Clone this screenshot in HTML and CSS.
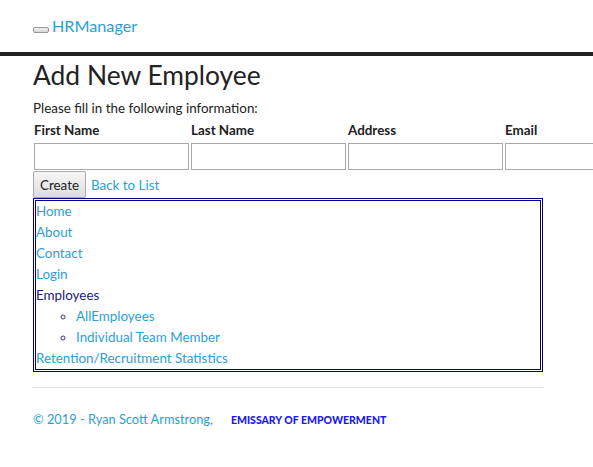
FILE: index.html
```html
<!DOCTYPE html>
<html>
<head>
<meta charset="utf-8">
<title>Add New Employee</title>
<link rel="stylesheet" href="styles.css">
</head>
<body>
<header class="navbar">
  <button class="navbar-toggle" type="button"></button><a class="brand" href="#">HRManager</a>
</header>
<main class="container">
  <h2 class="title">Add New Employee</h2>
  <p class="intro">Please fill in the following information:</p>
  <form class="form">
    <div class="fields">
      <label class="field-label">First Name</label>
      <label class="field-label">Last Name</label>
      <label class="field-label">Address</label>
      <label class="field-label">Email</label>
      <input class="field-input" type="text">
      <input class="field-input" type="text">
      <input class="field-input" type="text">
      <input class="field-input" type="text">
    </div>
    <div class="actions">
      <button class="btn" type="button">Create</button>
      <a class="link" href="#">Back to List</a>
    </div>
  </form>
  <nav class="menu">
    <ul class="menu-list">
      <li><a class="link" href="#">Home</a></li>
      <li><a class="link" href="#">About</a></li>
      <li><a class="link" href="#">Contact</a></li>
      <li><a class="link" href="#">Login</a></li>
      <li class="menu-group">Employees
        <ul class="submenu">
          <li><a class="link" href="#">AllEmployees</a></li>
          <li><a class="link" href="#">Individual Team Member</a></li>
        </ul>
      </li>
      <li><a class="link" href="#">Retention/Recruitment Statistics</a></li>
    </ul>
  </nav>
  <hr class="rule">
  <footer class="footer">
    <span class="copy">© 2019 - Ryan Scott Armstrong,</span>
    <span class="tagline">EMISSARY OF EMPOWERMENT</span>
  </footer>
</main>
</body>
</html>
```
FILE: styles.css
```css
html, body {
  margin: 0;
  padding: 0;
  background: #fff;
  overflow-x: hidden;
}
body {
  font-family: "Lato", "Liberation Sans", sans-serif;
  font-size: 13.4px;
  color: #222;
}
.navbar {
  height: 52px;
  border-bottom: 4px solid #222;
  display: flex;
  align-items: flex-end;
  padding-left: 33px;
  box-sizing: content-box;
}
.navbar-toggle {
  width: 16px;
  height: 6px;
  padding: 0;
  margin: 0 3px 19px 0;
  border: 1px solid #999;
  border-radius: 2px;
  background: linear-gradient(#f2f2f2, #d8d8d8);
}
.brand {
  color: #2a9fd6;
  text-decoration: none;
  font-size: 16.2px;
  line-height: 20px;
  margin-bottom: 16px;
}
.container {
  width: 510px;
  margin-left: 33px;
}
.title {
  margin: 1px 0 0;
  font-size: 26.4px;
  font-weight: 400;
  line-height: 36px;
  color: #222;
}
.intro {
  margin: 5px 0 0;
  line-height: 20px;
}
.fields {
  display: grid;
  grid-template-columns: repeat(4, 155px);
  column-gap: 2px;
  row-gap: 3px;
  margin-left: 1px;
  margin-top: 2px;
}
.field-label {
  font-weight: 700;
  line-height: 20px;
}
.field-input {
  box-sizing: border-box;
  width: 155px;
  height: 27px;
  margin: 0;
  border: 1px solid #a9a9a9;
  background: #fff;
}
.actions {
  display: flex;
  align-items: center;
  gap: 5px;
  margin-top: 1px;
}
.btn {
  height: 27px;
  padding: 0 6px;
  font-family: inherit;
  font-size: 13.4px;
  color: #222;
  border: 1px solid #aaa;
  border-radius: 2px;
  background: linear-gradient(#f6f6f6, #dddddd);
}
.link {
  color: #2a9fd6;
  text-decoration: none;
}
.menu {
  border: 3px double #00008b;
  margin-top: 0;
}
.menu-list {
  list-style: none;
  margin: 0;
  padding: 0;
}
.menu-list li {
  line-height: 21px;
}
.menu-group {
  color: #1a1a80;
}
.submenu {
  list-style: circle;
  margin: 0;
  padding-left: 40px;
  color: #3a3a9a;
}
.rule {
  border: 0;
  border-top: 1px solid #e2e2e2;
  margin: 15px 0 0;
}
.footer {
  display: flex;
  align-items: baseline;
  gap: 18px;
  margin-top: 21px;
  line-height: 20px;
}
.copy {
  color: #2a9fd6;
  font-size: 12.8px;
}
.tagline {
  color: #1a1af0;
  font-weight: 900;
  font-size: 10.5px;
}
```
